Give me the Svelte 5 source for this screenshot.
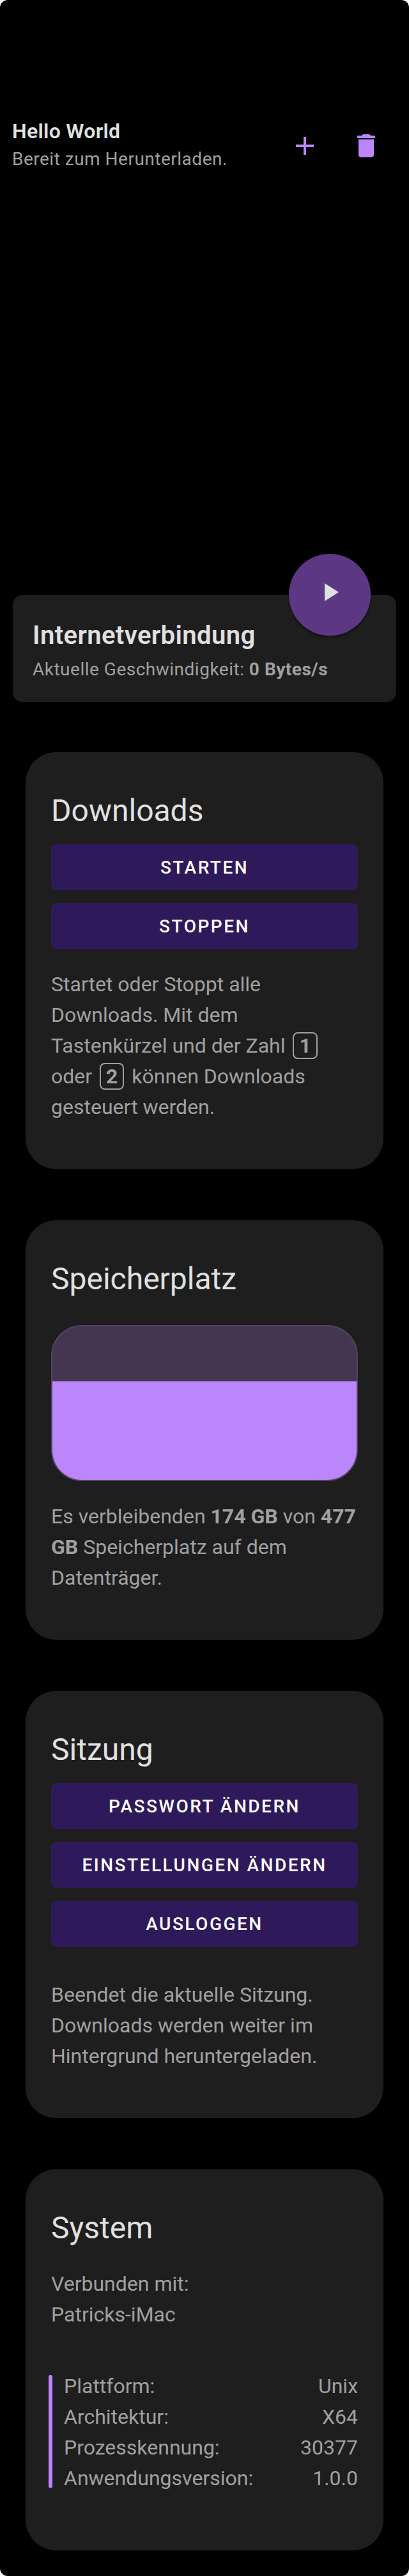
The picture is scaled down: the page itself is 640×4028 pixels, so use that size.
<script>
  const info = [
    ['Plattform:', 'Unix'],
    ['Architektur:', 'X64'],
    ['Prozesskennung:', '30377'],
    ['Anwendungsversion:', '1.0.0'],
  ];
  const used = 64.2;
</script>

<div class="window">
  <header>
    <div class="file">
      <h1>Hello World</h1>
      <p>Bereit zum Herunterladen.</p>
    </div>
    <button class="icon" aria-label="Hinzufügen">
      <svg viewBox="0 0 24 24"><path d="M19 13h-6v6h-2v-6H5v-2h6V5h2v6h6v2z" /></svg>
    </button>
    <button class="icon" aria-label="Löschen">
      <svg viewBox="0 0 24 24"><path d="M6 19c0 1.1.9 2 2 2h8c1.1 0 2-.9 2-2V7H6v12zM19 4h-3.5l-1-1h-5l-1 1H5v2h14V4z" /></svg>
    </button>
  </header>

  <section class="network">
    <button class="fab" aria-label="Abspielen">
      <svg viewBox="0 0 24 24"><path d="M8 5v14l11-7z" /></svg>
    </button>
    <h2>Internetverbindung</h2>
    <p>Aktuelle Geschwindigkeit: <b>0 Bytes/s</b></p>
  </section>

  <main>
    <section class="card">
      <h3>Downloads</h3>
      <div class="actions">
        <button>Starten</button>
        <button>Stoppen</button>
      </div>
      <p>Startet oder Stoppt alle Downloads. Mit dem Tastenkürzel und der Zahl <kbd>1</kbd> oder <kbd>2</kbd> können Downloads gesteuert werden.</p>
    </section>

    <section class="card">
      <h3>Speicherplatz</h3>
      <div class="gauge"><div class="used" style="height: {used}%"></div></div>
      <p>Es verbleibenden <b>174 GB</b> von <b>477 GB</b> Speicherplatz auf dem Datenträger.</p>
    </section>

    <section class="card session">
      <h3>Sitzung</h3>
      <div class="actions">
        <button>Passwort ändern</button>
        <button>Einstellungen ändern</button>
        <button>Ausloggen</button>
      </div>
      <p>Beendet die aktuelle Sitzung. Downloads werden weiter im Hintergrund heruntergeladen.</p>
    </section>

    <section class="card system">
      <h3>System</h3>
      <p>Verbunden mit:<br />Patricks-iMac</p>
      <div class="details">
        <i class="marker"></i>
        <dl>
          {#each info as [name, value]}
            <div><dt>{name}</dt><dd>{value}</dd></div>
          {/each}
        </dl>
      </div>
    </section>
  </main>
</div>

<style>
  :global(body) {
    margin: 0;
    background: #fff;
  }
  .window {
    box-sizing: border-box;
    width: 640px;
    height: 4028px;
    background: #000;
    border-radius: 12px;
    color: #a0a0a0;
    font-family: Roboto, sans-serif;
    overflow: hidden;
  }
  h1, h2, h3, p, dl, dd {
    margin: 0;
  }
  h1, h2, h3 {
    color: #e0e0e0;
    font-weight: 600;
  }
  button {
    border: 0;
    padding: 0;
    font-family: inherit;
  }
  b {
    font-weight: 700;
  }
  header {
    display: flex;
    box-sizing: border-box;
    height: 930px;
    padding: 184px 19.4px 0 19px;
  }
  .file {
    flex: 1;
  }
  h1 {
    font-size: 32px;
    line-height: 42px;
    letter-spacing: 0.009375em;
  }
  .file p {
    font-size: 28px;
    line-height: 45px;
    letter-spacing: 0.0178571429em;
  }
  .icon {
    display: grid;
    place-items: center;
    width: 96px;
    height: 88px;
    background: none;
  }
  svg {
    display: block;
    width: 48px;
    height: 48px;
    fill: #bb86fc;
  }
  .network {
    position: relative;
    box-sizing: border-box;
    height: 168px;
    margin: 0 20px;
    padding: 37px 31px 0;
    background: #1e1e1e;
    border-radius: 16px;
  }
  h2 {
    font-size: 40px;
    line-height: 53px;
    letter-spacing: 0.01em;
  }
  .network p {
    font-size: 28px;
    line-height: 39px;
    margin-top: 7px;
    letter-spacing: 0.0178571429em;
  }
  .fab {
    position: absolute;
    top: -64px;
    right: 40px;
    display: grid;
    place-items: center;
    box-sizing: border-box;
    width: 128px;
    height: 128px;
    padding: 0 0 8px;
    border-radius: 50%;
    background: #5c3783;
    box-shadow: 0 2px 4px rgba(0, 0, 0, 0.5);
  }
  .fab svg {
    fill: #e0e0e0;
  }
  main {
    display: flex;
    flex-direction: column;
    padding: 78px 40px 0;
  }
  .card {
    margin-bottom: 80px;
    padding: 60px 40px 73px;
    background: #1e1e1e;
    border-radius: 48px;
  }
  h3 {
    font-size: 48px;
    font-weight: 400;
    line-height: 63px;
  }
  .actions {
    display: grid;
    gap: 20px;
    margin-top: 21px;
  }
  .actions button {
    box-sizing: border-box;
    height: 72px;
    padding-top: 1px;
    border-radius: 8px;
    background: #2e1a5a;
    color: #fff;
    font-size: 28px;
    font-weight: 500;
    line-height: 71px;
    letter-spacing: 0.0892857143em;
    text-transform: uppercase;
  }
  .card p, dl {
    font-size: 32px;
    line-height: 48px;
  }
  .card p {
    margin-top: 31px;
  }
  kbd {
    margin: 0 4px;
    padding: 0 8px;
    border: 2px solid #a0a0a0;
    border-radius: 8px;
    font: inherit;
    font-weight: 700;
  }
  .gauge {
    display: flex;
    align-items: flex-end;
    box-sizing: border-box;
    height: 244px;
    margin-top: 41px;
    border: 2px solid #534363;
    border-radius: 48px;
    background: #443650;
    overflow: hidden;
  }
  .used {
    width: 100%;
    background: #bb86fc;
  }
  .session .actions + p {
    margin-top: 51px;
  }
  .system {
    padding-bottom: 89px;
  }
  .system p {
    margin-top: 32px;
  }
  .details {
    display: flex;
    gap: 18px;
    margin: 64px 0 0 -4px;
  }
  .marker {
    width: 6px;
    margin: 7px 0 9px;
    border-radius: 2px;
    background: #bb86fc;
  }
  dl {
    flex: 1;
  }
  dl div {
    display: flex;
    justify-content: space-between;
  }
</style>
